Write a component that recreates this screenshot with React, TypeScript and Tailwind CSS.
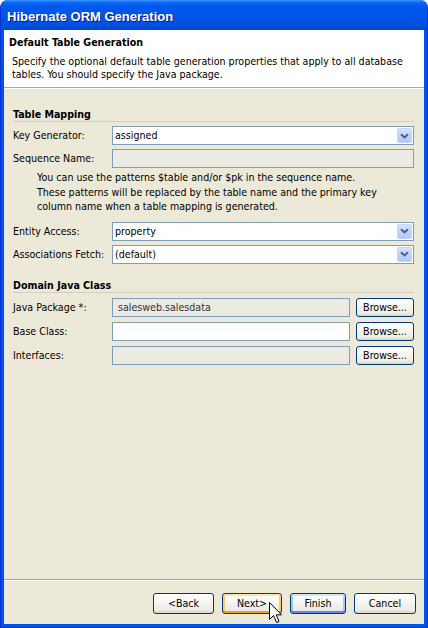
import React from "react";

function XpButton({ label, className = "", variant }: { label: string; className?: string; variant?: "hover" | "default" }) {
  let ring = "";
  if (variant === "hover") ring = "shadow-[inset_0_2px_0_#FFE6A8,inset_0_-2px_0_#E9A229,inset_2px_0_0_#FACB67,inset_-2px_0_0_#FACB67]";
  if (variant === "default") ring = "shadow-[inset_0_2px_0_#CEE7FF,inset_0_-2px_0_#6982EE,inset_2px_0_0_#A8C5F8,inset_-2px_0_0_#A8C5F8]";
  return (
    <div
      className={
        "flex items-center justify-center rounded-[3px] border border-[#003C74] bg-[linear-gradient(to_bottom,#FFFFFF_0%,#F6F6F2_40%,#ECEBE6_85%,#D8D2C6_100%)] " +
        ring +
        " " +
        className
      }
    >
      {label}
    </div>
  );
}

function Combo({ value }: { value: string }) {
  return (
    <div className="flex-1 h-[19px] flex items-center border border-[#7F9DB9] bg-white pl-[2px] pr-[1px]">
      <span className="flex-1">{value}</span>
      <div className="w-[15px] h-[15px] flex items-center justify-center rounded-[2px] border border-[#C3D3FD] bg-[linear-gradient(to_bottom,#D6E3FE_0%,#C1D3FB_50%,#B1C7F9_100%)]">
        <svg width="9" height="6" viewBox="0 0 9 6">
          <path d="M1 1.2 L4.5 4.5 L8 1.2" fill="none" stroke="#4D6185" strokeWidth="2" />
        </svg>
      </div>
    </div>
  );
}

function Field({ value = "", disabled }: { value?: string; disabled?: boolean }) {
  return (
    <div
      className={
        "flex-1 h-[19px] flex items-center border border-[#7F9DB9] pl-[5px] " +
        (disabled ? "bg-[#EBEAE3] text-[#333333]" : "bg-white")
      }
    >
      {value}
    </div>
  );
}

function Row({ label, children }: { label: string; children: React.ReactNode }) {
  return (
    <div className="flex items-center">
      <div className="w-[99px] shrink-0">{label}</div>
      <div className="flex-1 flex items-center gap-[6px]">{children}</div>
    </div>
  );
}

function Section({ title, className = "" }: { title: string; className?: string }) {
  return (
    <div className={"flex flex-col " + className}>
      <div className="font-bold leading-[13px]">{title}</div>
      <div className="h-px bg-[#D2CFC0]" />
    </div>
  );
}

export default function App() {
  return (
    <div className="w-[428px] h-[628px] bg-white relative font-['DejaVu_Sans_Condensed','Liberation_Sans',sans-serif] text-[10.6px] text-black leading-[13px]">
      <div className="flex flex-col h-full rounded-t-[8px] overflow-hidden bg-[#0054E3] border-x border-b border-[#0831D9]">
        {/* title bar */}
        <div className="h-[30px] shrink-0 flex items-center pl-[6px] pt-[3px] bg-[linear-gradient(to_bottom,#3D95FF_0%,#0A66F4_9%,#0058EE_22%,#0055E6_60%,#0050E0_85%,#0044D0_100%)]">
          <span className="font-['Liberation_Sans',sans-serif] font-bold text-[13px] text-white [text-shadow:1px_1px_0_#0A1883]">
            Hibernate ORM Generation
          </span>
        </div>

        <div className="flex-1 flex flex-col mx-[3px] mb-[3px] bg-[#ECE9D8]">
          {/* header */}
          <div className="h-[57px] shrink-0 bg-white flex flex-col pt-[6px]">
            <div className="pl-[5px] font-bold">Default Table Generation</div>
            <div className="pl-[8px] mt-[6px] pr-[8px]">
              Specify the optional default table generation properties that apply to all database tables. You should specify the Java package.
            </div>
          </div>
          <div className="h-px bg-[#ACA899]" />
          <div className="h-px bg-white" />

          {/* content */}
          <div className="flex-1 flex flex-col pl-[9px] pr-[10px]">
            <Section title="Table Mapping" className="mt-[19px]" />
            <div className="flex flex-col gap-[4px] mt-[4px]">
              <Row label="Key Generator:">
                <Combo value="assigned" />
              </Row>
              <Row label="Sequence Name:">
                <Field disabled />
              </Row>
            </div>
            <div className="pl-[24px] mt-[2px] leading-[14.5px] whitespace-nowrap">
              You can use the patterns $table and/or $pk in the sequence name.
              <br />
              These patterns will be replaced by the table name and the primary key
              <br />
              column name when a table mapping is generated.
            </div>
            <div className="flex flex-col gap-[4px] mt-[8px]">
              <Row label="Entity Access:">
                <Combo value="property" />
              </Row>
              <Row label="Associations Fetch:">
                <Combo value="(default)" />
              </Row>
            </div>

            <Section title="Domain Java Class" className="mt-[15px]" />
            <div className="flex flex-col gap-[5px] mt-[5px]">
              <Row label="Java Package *:">
                <Field value="salesweb.salesdata" disabled />
                <XpButton label="Browse..." className="w-[58px] h-[19px]" />
              </Row>
              <Row label="Base Class:">
                <Field />
                <XpButton label="Browse..." className="w-[58px] h-[19px]" />
              </Row>
              <Row label="Interfaces:">
                <Field disabled />
                <XpButton label="Browse..." className="w-[58px] h-[19px]" />
              </Row>
            </div>
          </div>

          {/* footer */}
          <div className="h-px bg-[#ACA899]" />
          <div className="h-px bg-white" />
          <div className="h-[43px] shrink-0 flex justify-end items-start pt-[12px] pr-[8px] gap-[8px]">
            <XpButton label="<Back" className="w-[61px] h-[21px]" />
            <XpButton label="Next>" className="w-[60px] h-[21px]" variant="hover" />
            <XpButton label="Finish" className="w-[56px] h-[21px]" variant="default" />
            <XpButton label="Cancel" className="w-[62px] h-[21px]" />
          </div>
        </div>
      </div>

      {/* mouse pointer */}
      <svg className="absolute left-[269px] top-[602px]" width="14" height="23" viewBox="0 0 14 23">
        <path
          d="M0.5 0.5 L0.5 17.5 L4.5 13.5 L7.5 20.5 L10 19.5 L7.2 12.8 L12.5 12.8 Z"
          fill="#FFFFFF"
          stroke="#000000"
          strokeWidth="1"
          strokeLinejoin="miter"
        />
      </svg>
    </div>
  );
}
